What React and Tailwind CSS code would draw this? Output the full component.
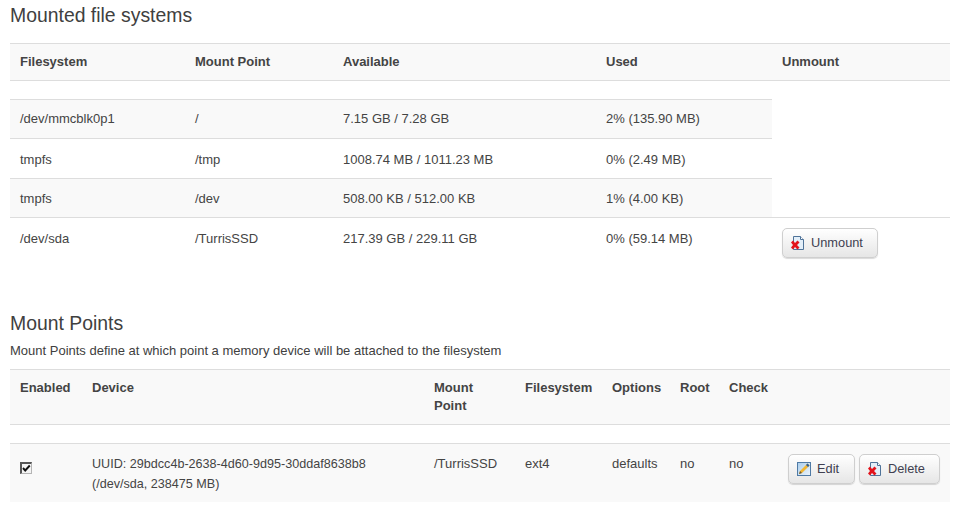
const th = 'text-left font-bold align-top px-2.5 pt-[9px] pb-0 leading-[18px]';
const td = 'align-top px-2.5 leading-[18px] border-t border-[#dddddd]';

function CrossIcon() {
  return (
    <svg width="16" height="16" viewBox="0 0 16 16" className="shrink-0">
      <path d="M3.500 1.500h7l3 3v10h-10z" fill="#e3eff9" stroke="#4f7399" />
      <path d="M10.500 1.500v3h3" fill="#fff" stroke="#4f7399" />
      <path d="M1 7.500l2-2L5 8l2.500-2.500 2 2L7 10l2.500 2.500-2 2L5 12l-2 2.500-2-2L3 10z" fill="#e3131b" />
    </svg>
  );
}

function EditIcon() {
  return (
    <svg width="16" height="16" viewBox="0 0 16 16" className="shrink-0">
      <defs>
        <linearGradient id="editFill" x1="0" y1="0" x2="1" y2="1">
          <stop offset="0" stopColor="#a9cdec" />
          <stop offset="1" stopColor="#eef5fb" />
        </linearGradient>
      </defs>
      <rect x="1.500" y="1.500" width="13" height="13" fill="url(#editFill)" stroke="#4f7aa5" />
      <path d="M3 13l1-3 7.500-7.500 2 2L6 12z" fill="#f2b632" />
      <path d="M11.500 2.500l2 2-1.500 1.500-2-2z" fill="#2f5f96" />
      <path d="M3 13l1-3 2 2z" fill="#6b5a3a" />
    </svg>
  );
}

function Button({ icon, label, width }) {
  return (
    <button className={`${width} h-[30px] flex items-center gap-[5px] pl-[7px] rounded-[5px] border border-[#cfcfcf] shadow-[0_1px_1px_rgba(0,0,0,0.15)] bg-gradient-to-b from-white to-[#e6e6e6] text-[12.8px] text-[#404050]`}>
      {icon}
      {label}
    </button>
  );
}

function Checkbox() {
  return (
    <div className="mt-[8px] w-[12px] h-[12px] bg-[#f4f4f4] border-2 border-r border-b border-[#b5b5b5] border-t-[#555555] border-l-[#555555]">
      <svg width="9" height="9" viewBox="0 0 9 9">
        <path d="M1 4l2.200 2.500L7.800 1.500" fill="none" stroke="#111" strokeWidth="1.900" />
      </svg>
    </div>
  );
}

const mounted = [
  ['/dev/mmcblk0p1', '/', '7.15 GB / 7.28 GB', '2% (135.90 MB)', 'bg-[#f9f9f9] pt-[10px]', 'h-[39px]'],
  ['tmpfs', '/tmp', '1008.74 MB / 1011.23 MB', '0% (2.49 MB)', 'pt-[12px]', 'h-[40px]'],
  ['tmpfs', '/dev', '508.00 KB / 512.00 KB', '1% (4.00 KB)', 'bg-[#f9f9f9] pt-[11px]', 'h-[39px]'],
];

export default function App() {
  return (
    <div className="w-[963px] h-[517px] overflow-hidden bg-white px-[10px] text-[13px] text-[#444444] font-['Liberation_Sans',Arial,sans-serif]">
      <h2 className="text-[19.4px] leading-[20px] pt-[5px] text-[#404040]">Mounted file systems</h2>

      <table className="mt-[18px] w-[940px] table-fixed border-collapse">
        <thead>
          <tr className="h-[37px] bg-[#f9f9f9] border-t border-b border-[#dddddd]">
            <th className={`${th} w-[175px]`}>Filesystem</th>
            <th className={`${th} w-[148px]`}>Mount Point</th>
            <th className={`${th} w-[263px]`}>Available</th>
            <th className={`${th} w-[176px]`}>Used</th>
            <th className={th}>Unmount</th>
          </tr>
        </thead>
        <tbody>
          <tr className="h-[19px]"><td colSpan="5"></td></tr>
          {mounted.map((row, i) => (
            <tr key={i} className={row[5]}>
              <td className={`${td} ${row[4]}`}>{row[0]}</td>
              <td className={`${td} ${row[4]}`}>{row[1]}</td>
              <td className={`${td} ${row[4]}`}>{row[2]}</td>
              <td className={`${td} ${row[4]}`}>{row[3]}</td>
            </tr>
          ))}
          <tr className="h-[50px]">
            <td className={`${td} pt-[12px]`}>/dev/sda</td>
            <td className={`${td} pt-[12px]`}>/TurrisSSD</td>
            <td className={`${td} pt-[12px]`}>217.39 GB / 229.11 GB</td>
            <td className={`${td} pt-[12px]`}>0% (59.14 MB)</td>
            <td className="align-top px-2.5 pt-[10px] border-t border-[#dddddd]">
              <Button icon={<CrossIcon />} label="Unmount" width="w-[96px]" />
            </td>
          </tr>
        </tbody>
      </table>

      <h2 className="text-[19.4px] leading-[20px] mt-[45px] text-[#404040]">Mount Points</h2>
      <p className="mt-[11px] text-[13px] leading-[14px] text-[#404040]">Mount Points define at which point a memory device will be attached to the filesystem</p>

      <table className="mt-[11px] w-[940px] table-fixed border-collapse">
        <thead>
          <tr className="h-[55px] bg-[#f9f9f9] border-t border-b border-[#dddddd]">
            <th className={`${th} w-[72px]`}>Enabled</th>
            <th className={`${th} w-[342px]`}>Device</th>
            <th className={`${th} w-[91px]`}>Mount Point</th>
            <th className={`${th} w-[87px]`}>Filesystem</th>
            <th className={`${th} w-[68px]`}>Options</th>
            <th className={`${th} w-[49px]`}>Root</th>
            <th className={`${th} w-[59px]`}>Check</th>
            <th className={th}></th>
          </tr>
        </thead>
        <tbody>
          <tr className="h-[19px]"><td colSpan="8"></td></tr>
          <tr className="h-[59px] bg-[#f9f9f9]">
            <td className={`${td} pt-[10px]`}><Checkbox /></td>
            <td className={`${td} pt-[10px] text-[12.6px]`}>
              <div className="leading-[20px]">
                UUID: 29bdcc4b-2638-4d60-9d95-30ddaf8638b8
                <br />
                (/dev/sda, 238475 MB)
              </div>
            </td>
            <td className={`${td} pt-[11px]`}>/TurrisSSD</td>
            <td className={`${td} pt-[11px]`}>ext4</td>
            <td className={`${td} pt-[11px]`}>defaults</td>
            <td className={`${td} pt-[11px]`}>no</td>
            <td className={`${td} pt-[11px]`}>no</td>
            <td className="align-top border-t border-[#dddddd] pt-[10px] pl-[10px]">
              <div className="flex gap-[4px]">
                <Button icon={<EditIcon />} label="Edit" width="w-[67px]" />
                <Button icon={<CrossIcon />} label="Delete" width="w-[81px]" />
              </div>
            </td>
          </tr>
        </tbody>
      </table>
    </div>
  );
}
